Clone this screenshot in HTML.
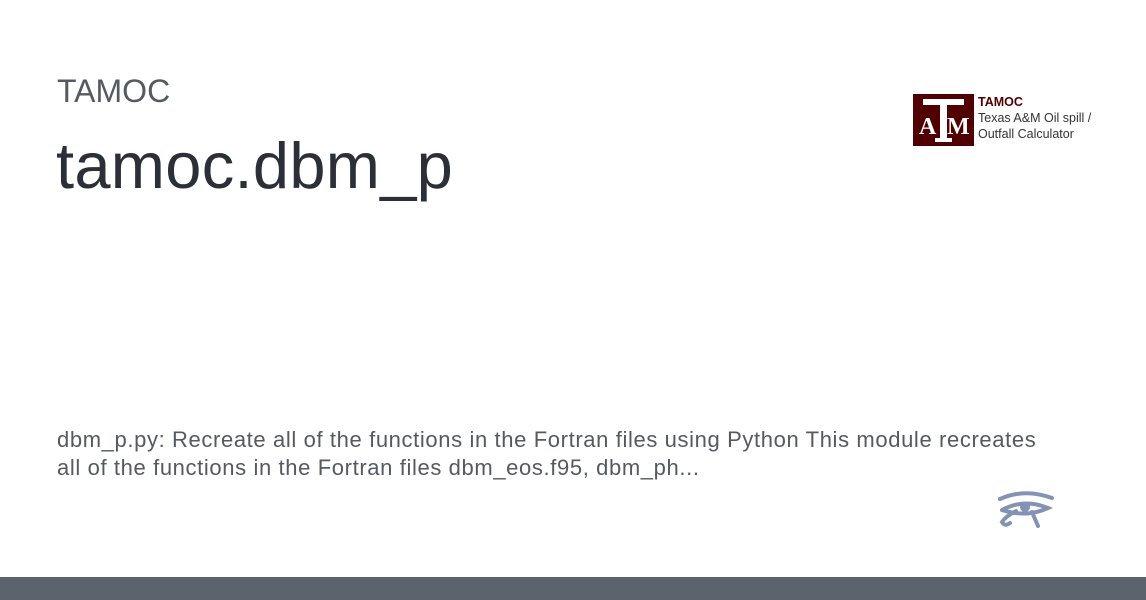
<!DOCTYPE html>
<html><head><style>
body{margin:0;width:1146px;height:600px;background:#fff;position:relative;overflow:hidden;font-family:"Liberation Sans",sans-serif}
.a{position:absolute;left:57px;top:73px;font-size:32px;color:#545a62}
.t{position:absolute;left:56px;top:128px;font-size:65px;color:#2b3038;letter-spacing:0.3px}
.d{position:absolute;left:57px;top:426px;font-size:22px;letter-spacing:0.62px;line-height:28px;color:#555a62;white-space:nowrap}
.bar{position:absolute;left:0;top:577px;width:1146px;height:23px;background:#5b636c}
.logo{position:absolute;left:913px;top:94px;width:61px;height:52px;background:#500000}
.lt{position:absolute;left:978px;top:94px;font-size:12.5px;line-height:16px;color:#333}
</style></head><body>
<div class="a">TAMOC</div>
<div class="t">tamoc.dbm_p</div>
<div class="logo"><svg width="61" height="52" viewBox="0 0 61 52"><g fill="#fff"><rect x="10" y="5" width="41" height="6"/><rect x="27" y="5" width="7" height="42"/><rect x="22" y="44" width="17" height="4"/><text x="6" y="40" font-family="Liberation Serif" font-weight="bold" font-size="24">A</text><text x="34" y="40" font-family="Liberation Serif" font-weight="bold" font-size="24">M</text></g></svg></div>
<div class="lt"><b style="color:#500000">TAMOC</b><br>Texas A&amp;M Oil spill /<br>Outfall Calculator</div>
<div class="d">dbm_p.py: Recreate all of the functions in the Fortran files using Python This module recreates<br>all of the functions in the Fortran files dbm_eos.f95, dbm_ph...</div>
<svg style="position:absolute;left:996px;top:490px" width="60" height="40" viewBox="0 0 60 40"><g fill="none" stroke="#8393b5" stroke-width="4" stroke-linecap="round"><path d="M4 9 Q28 -2 56 8"/><path d="M6 20 Q28 8 52 18 Q30 28 6 20"/><path d="M20 21 Q10 26 6 32 Q9 37 14 33"/><path d="M36 22 L42 36"/></g><circle cx="29" cy="17" r="5" fill="#8393b5"/></svg>
<div class="bar"></div>
</body></html>
